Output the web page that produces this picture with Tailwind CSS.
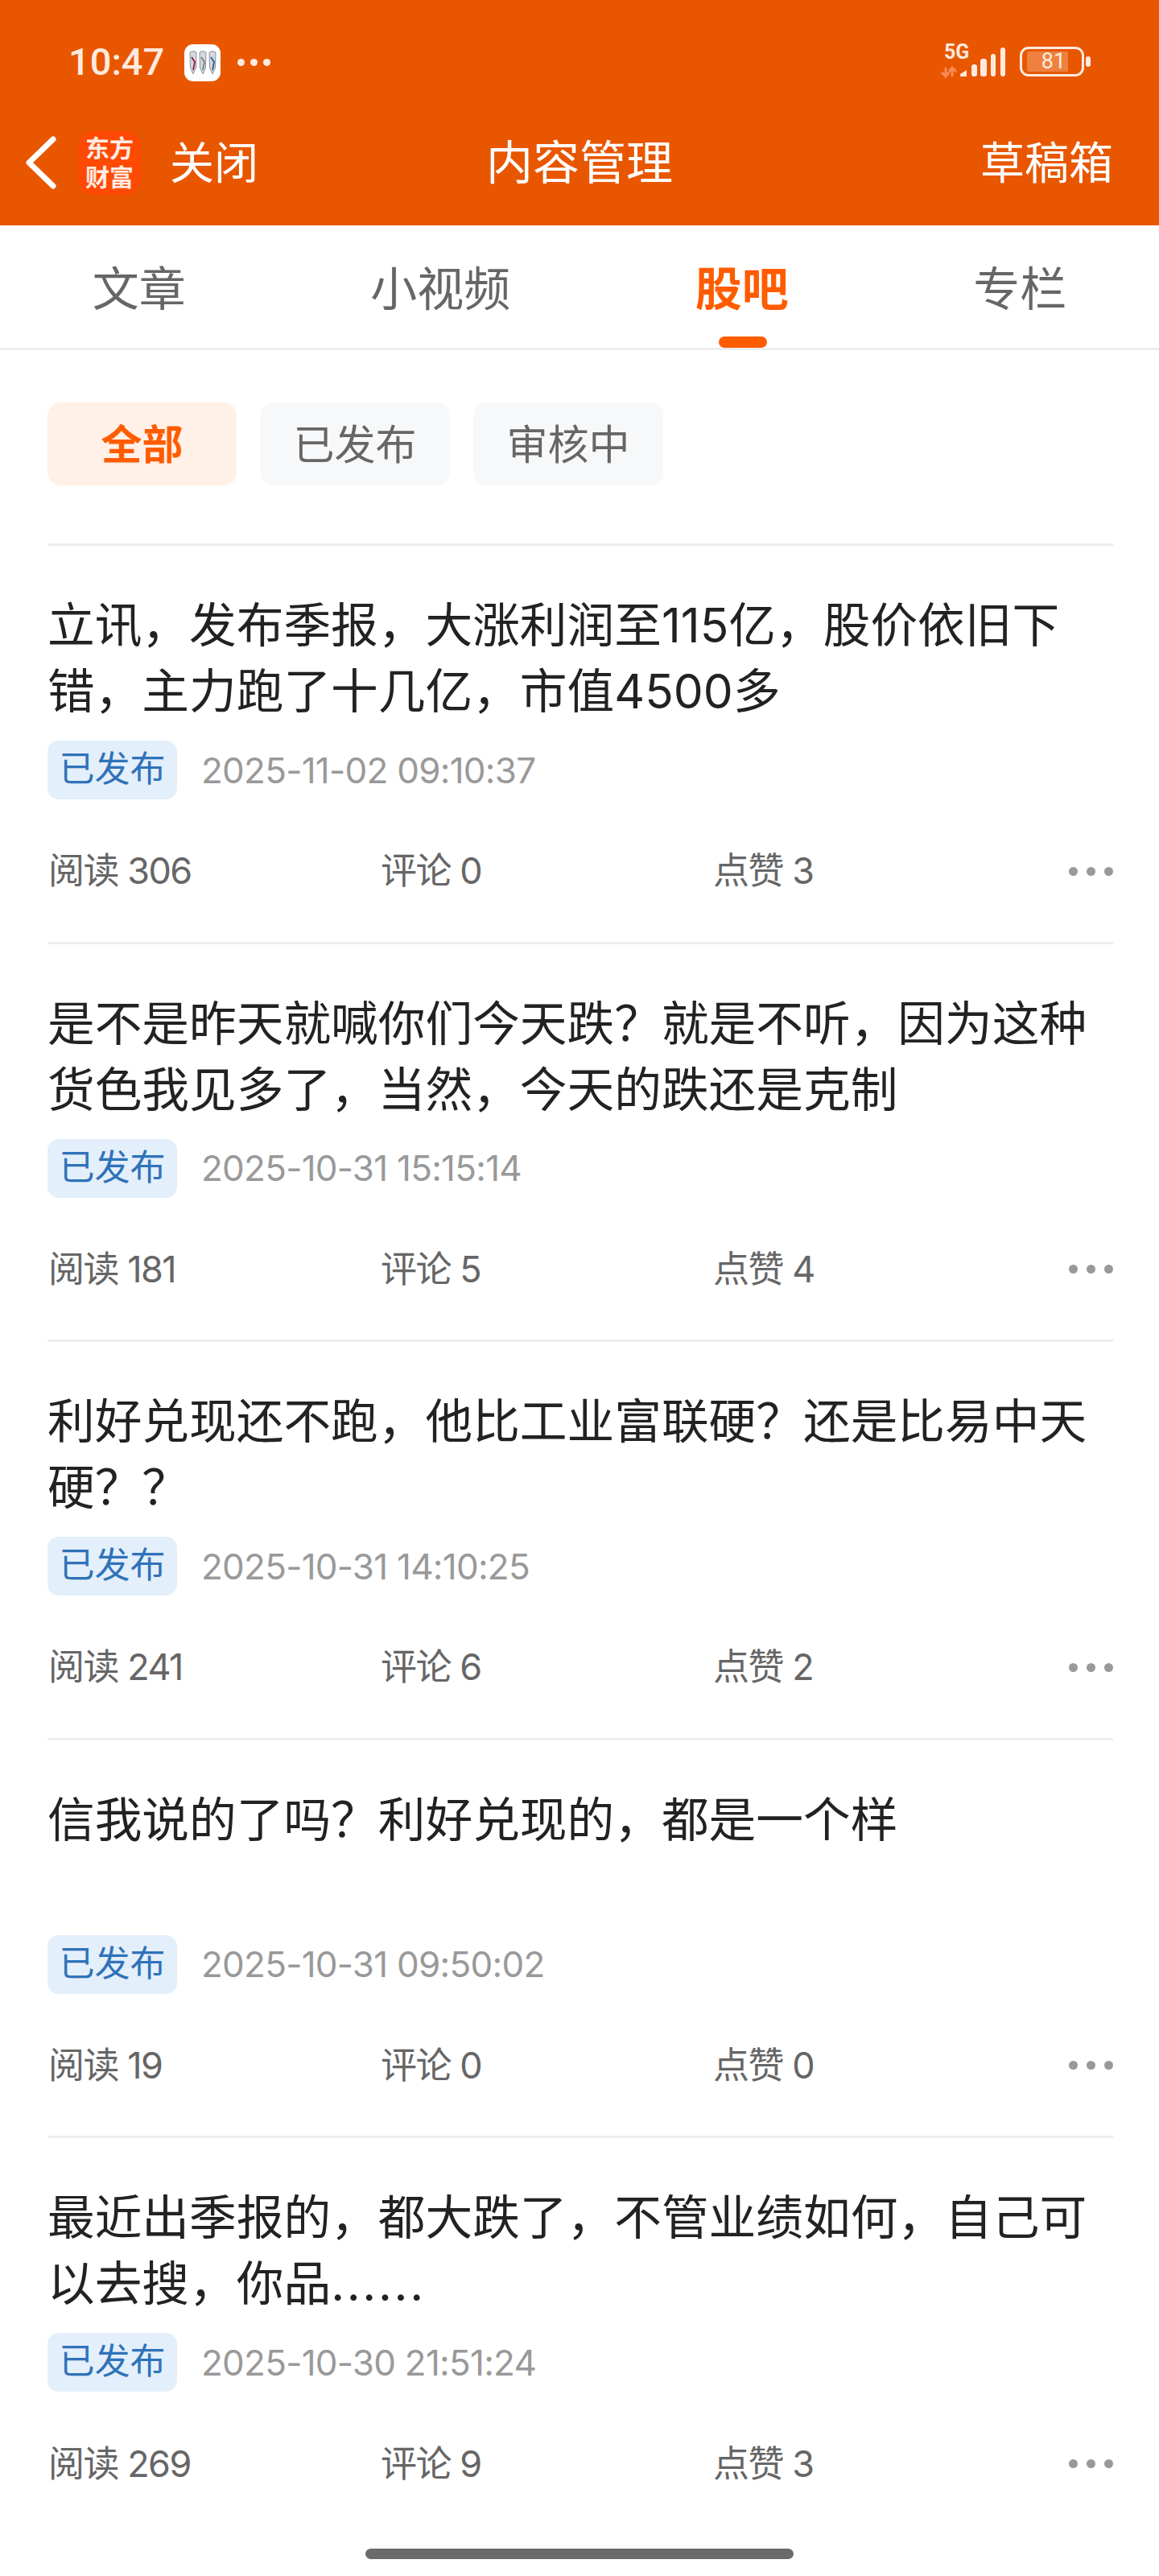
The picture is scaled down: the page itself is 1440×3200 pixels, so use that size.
<!DOCTYPE html>
<html lang="zh-CN">
<head>
  <meta charset="UTF-8" />
  <title>内容管理</title>
  <script src="https://cdn.jsdelivr.net/npm/@tailwindcss/browser@4"></script>
</head>
<body class="bg-white font-['Inter','Noto_Sans_CJK_SC',sans-serif]">
<div class="relative w-[1440px] h-[3200px] overflow-hidden">

  <!-- 顶部橙色区域 -->
  <header class="h-[280px] bg-[#e85700] text-white">
    <div class="h-[120px] pl-[85px] pr-[85px] flex items-start">
      <span class="mt-[48px] text-[47px] leading-[58px] font-medium font-['Roboto',sans-serif] text-[#ffeadf]">10:47</span>
      <div class="mt-[55px] ml-[25px] w-[45px] h-[46px] rounded-[11px] bg-white flex items-center justify-center">
        <svg width="36" height="32" viewBox="0 0 36 32" fill="none">
          <path d="M2 3Q6 0 10 3L9.500 22L6 30L2.500 22Z" fill="#d5d8dc" stroke="#8d939b" stroke-width="1"/>
          <path d="M14 3Q18 0 22 3L21.500 22L18 30L14.500 22Z" fill="#d5d8dc" stroke="#8d939b" stroke-width="1"/>
          <path d="M26 3Q30 0 34 3L33.500 22L30 30L26.500 22Z" fill="#d5d8dc" stroke="#8d939b" stroke-width="1"/>
          <path d="M4 9L8 15L6 25" stroke="#8c1d3a" stroke-width="1.800"/>
          <path d="M16 9L20 15L18 25" stroke="#7c8087" stroke-width="1.800"/>
          <path d="M28 9L32 15L30 25" stroke="#2a5aa5" stroke-width="1.800"/>
        </svg>
      </div>
      <div class="mt-[73px] ml-[21px] flex gap-[7px]">
        <span class="w-[9px] h-[9px] rounded-full bg-[#ffeadf]"></span>
        <span class="w-[9px] h-[9px] rounded-full bg-[#ffeadf]"></span>
        <span class="w-[9px] h-[9px] rounded-full bg-[#ffeadf]"></span>
      </div>

      <div class="ml-auto mt-[54px] flex items-start">
        <div class="relative w-[82px] h-[44px]">
          <span class="absolute left-[5px] top-[-2px] text-[25px] leading-[26px] font-bold font-['Roboto',sans-serif] text-[#ffeadf]">5G</span>
          <svg width="82" height="44" viewBox="0 0 82 44">
            <path d="M7 30V41M2 36L7 41L11 36" stroke="#f98b58" stroke-width="3" fill="none"/>
            <path d="M15 41V30M11 35L15 30L20 35" stroke="#f98b58" stroke-width="3" fill="none"/>
            <path d="M25 41V38L33 33V41Z" fill="#ffeadf"/>
            <rect x="39" y="26" width="7" height="15" rx="3" fill="#ffeadf"/>
            <rect x="50" y="19" width="8" height="22" rx="3" fill="#ffeadf"/>
            <rect x="63" y="13" width="6" height="28" rx="3" fill="#ffeadf"/>
            <rect x="75" y="5" width="6" height="36" rx="3" fill="#ffeadf"/>
          </svg>
        </div>
        <div class="relative ml-[17px] mt-[4px] w-[80px] h-[37px] rounded-[11px] border-[3px] border-[#ffeadf]">
          <div class="absolute left-[6px] top-[3px] w-[51px] h-[25px] rounded-[2px] bg-white/25"></div>
          <span class="absolute inset-0 text-center text-[27px] leading-[31px] font-['Roboto',sans-serif] text-[#ffeadf] pl-[4px]">81</span>
        </div>
        <div class="ml-[2px] mt-[16px] w-[6px] h-[13px] rounded-full bg-[#ffeadf]"></div>
      </div>
    </div>

    <div class="h-[160px] pt-[4px] px-[31px] grid grid-cols-[1fr_auto_1fr] items-center">
      <div class="flex items-center">
        <svg width="40" height="66" viewBox="0 0 40 66" fill="none">
          <path d="M35 4L5 33L35 62" stroke="#fff" stroke-width="7" stroke-linecap="round" stroke-linejoin="round"/>
        </svg>
        <div class="ml-[26px] w-[78px] h-[79px] rounded-[20px] bg-[#ff4a05] flex flex-col items-center justify-center text-[30px] leading-[36px] font-bold text-[#ffece2]">
          <span>东方</span>
          <span>财富</span>
        </div>
        <span class="ml-[36px] text-[55px] leading-[70px]">关闭</span>
      </div>
      <h1 class="text-[58px] leading-[70px] font-normal">内容管理</h1>
      <a class="justify-self-end mr-[26px] text-[55px] leading-[70px]">草稿箱</a>
    </div>
  </header>

  <!-- 分类 tab -->
  <nav class="h-[155px] pt-[6px] border-b-[3px] border-[#eeeeee] flex justify-around items-center text-[58px] text-[#666666]">
    <span>文章</span>
    <span>小视频</span>
    <span class="relative h-full flex items-center font-bold text-[#ff5c00]">
      股吧
      <i class="absolute bottom-0 left-[29px] w-[60px] h-[14px] rounded-full bg-[#ff5c00]"></i>
    </span>
    <span>专栏</span>
  </nav>

  <!-- 状态筛选 -->
  <div class="pt-[65px] px-[59px] pb-[72px] flex gap-[29px] text-[51px] leading-[97px] text-[#666666]">
    <button class="w-[235px] h-[103px] pt-[2px] rounded-[16px] bg-[#fff0e8] font-bold text-[#ff5c00]">全部</button>
    <button class="w-[236px] h-[103px] pt-[2px] rounded-[16px] bg-[#f7f8fa]">已发布</button>
    <button class="w-[236px] h-[103px] pt-[2px] rounded-[16px] bg-[#f7f8fa]">审核中</button>
  </div>

  <div id="postList" class="pl-[59px] pr-[57px]"></div>

  <!-- 底部手势条 -->
  <div class="absolute left-[454px] top-[3166px] w-[532px] h-[13px] rounded-full bg-[#6b6b6b]"></div>
</div>

<script>
  const posts = [
    { title: "立讯，发布季报，大涨利润至115亿，股价依旧下错，主力跑了十几亿，市值4500多", date: "2025-11-02 09:10:37", read: 306, comment: 0, like: 3 },
    { title: "是不是昨天就喊你们今天跌？就是不听，因为这种货色我见多了，当然，今天的跌还是克制", date: "2025-10-31 15:15:14", read: 181, comment: 5, like: 4 },
    { title: "利好兑现还不跑，他比工业富联硬？还是比易中天硬？？", date: "2025-10-31 14:10:25", read: 241, comment: 6, like: 2 },
    { title: "信我说的了吗？利好兑现的，都是一个样", date: "2025-10-31 09:50:02", read: 19, comment: 0, like: 0 },
    { title: '最近出季报的，都大跌了，不管业绩如何，自己可以去搜，你品<span class="tracking-[2.7px]">......</span>', date: "2025-10-30 21:51:24", read: 269, comment: 9, like: 3 }
  ];

  document.getElementById("postList").innerHTML = posts.map(p => `
    <article class="h-[494.6px] border-t-[3px] border-[#eeeeee] pt-[58px]">
      <h2 class="h-[164px] text-[58.7px] leading-[82px] font-normal text-[#222222]">${p.title}</h2>
      <div class="mt-[20px] flex items-center">
        <span class="w-[161px] h-[73px] rounded-[14px] bg-[#e3effa] text-center text-[44px] leading-[71px] text-[#2f72b9]">已发布</span>
        <span class="ml-[30px] text-[44px] tracking-[-0.75px] text-[#999999]">${p.date}</span>
      </div>
      <div class="mt-[49px] h-[80px] flex items-center text-[45px] tracking-[-1.5px] text-[#666666] pl-[1px]">
        <span class="w-[413px]">阅读 ${p.read}</span>
        <span class="w-[413px]">评论 ${p.comment}</span>
        <span>点赞 ${p.like}</span>
        <div class="ml-auto flex gap-[11px]">
          <i class="w-[11px] h-[11px] rounded-full bg-[#999999]"></i>
          <i class="w-[11px] h-[11px] rounded-full bg-[#999999]"></i>
          <i class="w-[11px] h-[11px] rounded-full bg-[#999999]"></i>
        </div>
      </div>
    </article>`).join("");
</script>
</body>
</html>
